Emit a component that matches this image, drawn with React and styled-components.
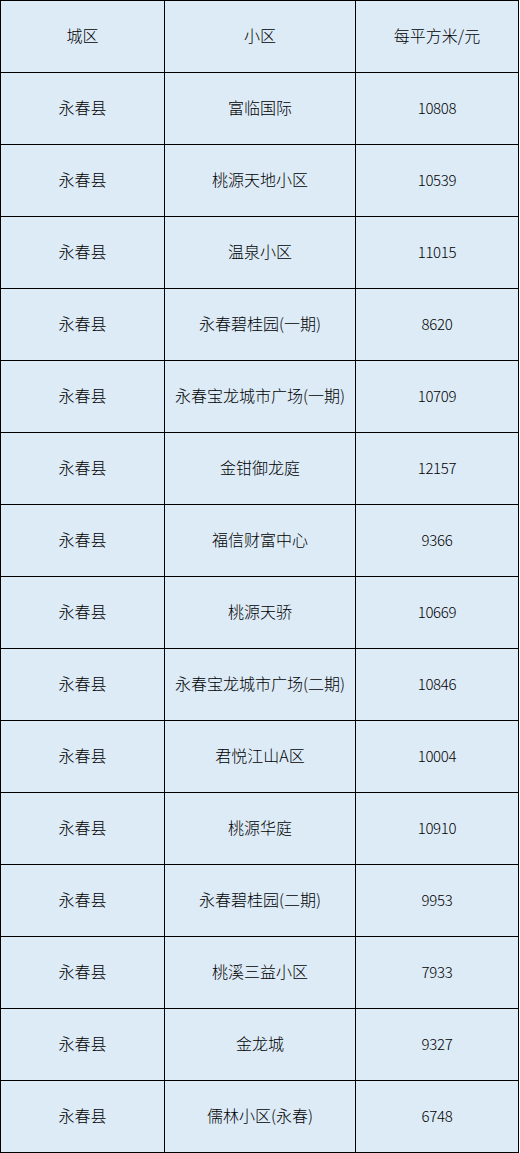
import React from "react";
import styled, { createGlobalStyle } from "styled-components";

const GlobalStyle = createGlobalStyle`
  html, body {
    margin: 0;
    padding: 0;
    background: #ffffff;
  }
`;

const Table = styled.div`
  display: grid;
  grid-template-columns: 164px 191px 163px;
  grid-auto-rows: 72px;
  width: 518px;
  border-left: 1px solid #000;
  border-top: 1px solid #000;
  font-family: "Noto Sans CJK SC", "Noto Sans", sans-serif;
  font-size: 16px;
  font-weight: 300;
  color: #000;
`;

const Cell = styled.div`
  display: flex;
  align-items: center;
  justify-content: center;
  box-sizing: border-box;
  background: #ddebf7;
  border-right: 1px solid #000;
  border-bottom: 1px solid #000;
  padding-bottom: 3px;
  white-space: nowrap;
  font-size: ${(p) => (p.num ? "15px" : "16px")};
  letter-spacing: ${(p) => (p.num ? "-0.3px" : "0")};
`;

const rows = [
  ["富临国际", "10808"],
  ["桃源天地小区", "10539"],
  ["温泉小区", "11015"],
  ["永春碧桂园(一期)", "8620"],
  ["永春宝龙城市广场(一期)", "10709"],
  ["金钳御龙庭", "12157"],
  ["福信财富中心", "9366"],
  ["桃源天骄", "10669"],
  ["永春宝龙城市广场(二期)", "10846"],
  ["君悦江山A区", "10004"],
  ["桃源华庭", "10910"],
  ["永春碧桂园(二期)", "9953"],
  ["桃溪三益小区", "7933"],
  ["金龙城", "9327"],
  ["儒林小区(永春)", "6748"],
];

export default function App() {
  return (
    <>
      <GlobalStyle />
      <Table>
        <Cell>城区</Cell>
        <Cell>小区</Cell>
        <Cell>每平方米/元</Cell>
        {rows.map(([name, price]) => (
          <React.Fragment key={name}>
            <Cell>永春县</Cell>
            <Cell>{name}</Cell>
            <Cell num>{price}</Cell>
          </React.Fragment>
        ))}
      </Table>
    </>
  );
}
